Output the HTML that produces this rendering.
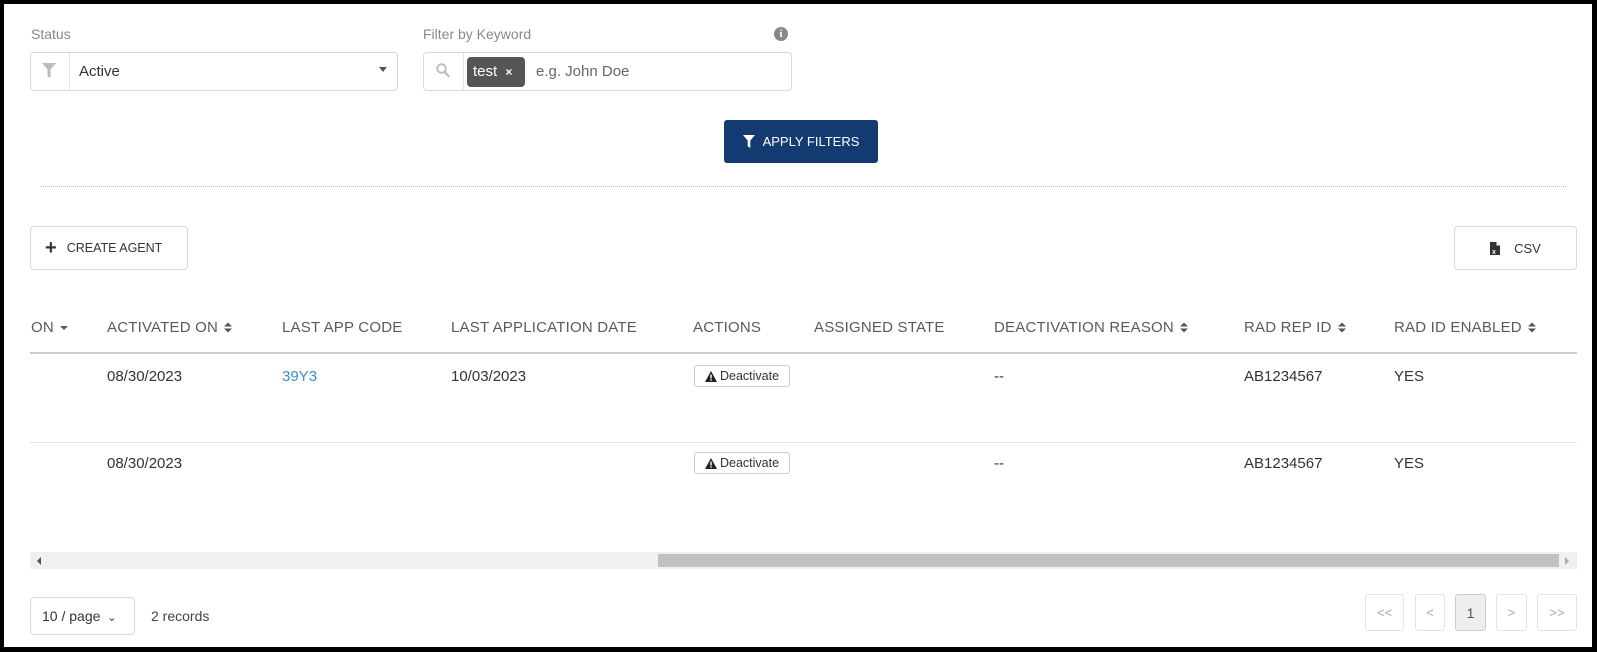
<!DOCTYPE html>
<html><head><meta charset="utf-8"><style>
*{box-sizing:border-box;margin:0;padding:0}
body{width:1597px;height:652px;overflow:hidden;background:#fff;font-family:"Liberation Sans",Arial,sans-serif;position:relative;color:#333}
.a{position:absolute}
.frame{left:0;top:0;width:1597px;height:652px;border:4px solid #000;border-bottom-width:5px;border-right-width:5px}
.lbl{font-size:14px;color:#888}
.box{border:1px solid #d9d9d9;border-radius:4px;background:#fff}
.th{top:319px;font-size:15px;color:#5a5a5a;white-space:nowrap;letter-spacing:0.2px}
.td{font-size:15px;color:#333;white-space:nowrap}
.srt{display:inline-block;width:8px;height:11px;vertical-align:-1px;margin-left:2px}
.deact{width:96px;height:22px;border:1px solid #ccc;border-radius:3px;font-size:12.5px;color:#333;display:flex;align-items:center;justify-content:center;gap:3px;background:#fff}
.pg{top:594px;height:37px;border:1px solid #e3e3e3;border-radius:3px;font-size:13px;color:#aaa;display:flex;align-items:center;justify-content:center}
</style></head><body>
<div class="a frame"></div>

<div class="a lbl" style="left:31px;top:26px">Status</div>
<div class="a box" style="left:30px;top:52px;width:368px;height:39px"></div>
<div class="a" style="left:69px;top:53px;width:1px;height:37px;background:#e3e3e3"></div>
<svg class="a" style="left:42px;top:63px" width="14" height="15" viewBox="0 0 14 15"><path d="M0 0H14L8.5 6.5V15L5.5 13V6.5Z" fill="#bbb"/></svg>
<div class="a" style="left:79px;top:63px;font-size:15px;color:#333">Active</div>
<div class="a" style="left:379px;top:67px;width:0;height:0;border-left:4px solid transparent;border-right:4px solid transparent;border-top:5px solid #555"></div>

<div class="a lbl" style="left:423px;top:26px">Filter by Keyword</div>
<div class="a" style="left:774px;top:27px;width:14px;height:14px;border-radius:50%;background:#888;color:#fff;font-size:11px;font-weight:bold;text-align:center;line-height:14px;font-family:'Liberation Serif',serif">i</div>
<div class="a box" style="left:423px;top:52px;width:369px;height:39px"></div>
<div class="a" style="left:463px;top:53px;width:1px;height:37px;background:#e3e3e3"></div>
<svg class="a" style="left:436px;top:63px" width="14" height="15" viewBox="0 0 14 15"><circle cx="5.5" cy="5.5" r="4.3" fill="none" stroke="#bbb" stroke-width="1.8"/><path d="M8.5 8.8L12.5 13" stroke="#bbb" stroke-width="2.2" stroke-linecap="round"/></svg>
<div class="a" style="left:467px;top:57px;width:58px;height:30px;background:#555;border-radius:4px;color:#fff;font-size:15px;padding:6px 0 0 6px">test <span style="font-size:12px;font-weight:bold;margin-left:4px">×</span></div>
<div class="a" style="left:536px;top:63px;font-size:15px;color:#666">e.g. John Doe</div>

<div class="a" style="left:724px;top:120px;width:154px;height:43px;background:#143a72;border-radius:3px;color:#fff;font-size:13px;display:flex;align-items:center;justify-content:center;gap:8px">
<svg width="12" height="13" viewBox="0 0 12 13"><path d="M0 0H12L7.3 5.5V13L4.7 11.3V5.5Z" fill="#fff"/></svg>APPLY FILTERS</div>

<div class="a" style="left:41px;top:186px;width:1525px;border-top:1px dotted #bbb"></div>

<div class="a box" style="left:30px;top:226px;width:158px;height:44px;display:flex;align-items:center;padding-left:14px;font-size:12.5px;color:#333;gap:10px"><span style="font-size:20px;font-weight:bold;line-height:1">+</span>CREATE AGENT</div>
<div class="a box" style="left:1454px;top:226px;width:123px;height:44px;display:flex;align-items:center;justify-content:center;font-size:13px;color:#333;gap:14px">
<svg width="10" height="13" viewBox="0 0 10 13"><path d="M0 0H6.5L10 3.5V13H0Z" fill="#333"/><path d="M6.5 0V3.5H10" fill="#fff"/><text x="2" y="12" font-size="7" fill="#fff" font-family="Liberation Sans" font-weight="bold">x</text></svg>CSV</div>

<div class="a th" style="left:31px">ON <svg class="srt" viewBox="0 0 8 11"><path d="M0 4H8L4 8Z" fill="#555"/></svg></div>
<div class="a th" style="left:107px">ACTIVATED ON <svg class="srt" viewBox="0 0 8 11"><path d="M0 4.5H8L4 0.5Z M0 6.5H8L4 10.5Z" fill="#555"/></svg></div>
<div class="a th" style="left:282px">LAST APP CODE</div>
<div class="a th" style="left:451px">LAST APPLICATION DATE</div>
<div class="a th" style="left:693px">ACTIONS</div>
<div class="a th" style="left:814px">ASSIGNED STATE</div>
<div class="a th" style="left:994px">DEACTIVATION REASON <svg class="srt" viewBox="0 0 8 11"><path d="M0 4.5H8L4 0.5Z M0 6.5H8L4 10.5Z" fill="#555"/></svg></div>
<div class="a th" style="left:1244px">RAD REP ID <svg class="srt" viewBox="0 0 8 11"><path d="M0 4.5H8L4 0.5Z M0 6.5H8L4 10.5Z" fill="#555"/></svg></div>
<div class="a th" style="left:1394px">RAD ID ENABLED <svg class="srt" viewBox="0 0 8 11"><path d="M0 4.5H8L4 0.5Z M0 6.5H8L4 10.5Z" fill="#555"/></svg></div>
<div class="a" style="left:30px;top:352px;width:1547px;height:2px;background:#ccc"></div>

<div class="a td" style="left:107px;top:368px">08/30/2023</div>
<div class="a td" style="left:282px;top:368px;color:#3a8fc8">39Y3</div>
<div class="a td" style="left:451px;top:368px">10/03/2023</div>
<div class="a deact" style="left:694px;top:365px"><svg width="12" height="11" viewBox="0 0 12 11"><path d="M6 0L12 11H0Z" fill="#222"/><rect x="5.3" y="3.5" width="1.4" height="4" fill="#fff"/><rect x="5.3" y="8.3" width="1.4" height="1.4" fill="#fff"/></svg>Deactivate</div>
<div class="a td" style="left:994px;top:368px">--</div>
<div class="a td" style="left:1244px;top:368px">AB1234567</div>
<div class="a td" style="left:1394px;top:368px">YES</div>
<div class="a" style="left:30px;top:442px;width:1547px;height:1px;background:#e3e3e3"></div>

<div class="a td" style="left:107px;top:455px">08/30/2023</div>
<div class="a deact" style="left:694px;top:452px"><svg width="12" height="11" viewBox="0 0 12 11"><path d="M6 0L12 11H0Z" fill="#222"/><rect x="5.3" y="3.5" width="1.4" height="4" fill="#fff"/><rect x="5.3" y="8.3" width="1.4" height="1.4" fill="#fff"/></svg>Deactivate</div>
<div class="a td" style="left:994px;top:455px">--</div>
<div class="a td" style="left:1244px;top:455px">AB1234567</div>
<div class="a td" style="left:1394px;top:455px">YES</div>

<div class="a" style="left:30px;top:552px;width:1547px;height:17px;background:#f0f0f0"></div>
<div class="a" style="left:658px;top:554px;width:901px;height:13px;background:#c1c1c1"></div>
<div class="a" style="left:37px;top:557px;width:0;height:0;border-top:4px solid transparent;border-bottom:4px solid transparent;border-right:4px solid #555"></div>
<div class="a" style="left:1565px;top:557px;width:0;height:0;border-top:4px solid transparent;border-bottom:4px solid transparent;border-left:4px solid #aaa"></div>

<div class="a box" style="left:30px;top:597px;width:105px;height:38px;font-size:14px;color:#333;padding:10px 0 0 11px">10 / page <span style="font-size:11px;margin-left:3px">⌄</span></div>
<div class="a" style="left:151px;top:608px;font-size:14px;color:#444">2 records</div>

<div class="a pg" style="left:1365px;width:39px">&lt;&lt;</div>
<div class="a pg" style="left:1415px;width:30px">&lt;</div>
<div class="a pg" style="left:1455px;width:31px;background:#eee;border-color:#ccc;color:#555;font-size:14px">1</div>
<div class="a pg" style="left:1496px;width:31px">&gt;</div>
<div class="a pg" style="left:1537px;width:40px">&gt;&gt;</div>
</body></html>
